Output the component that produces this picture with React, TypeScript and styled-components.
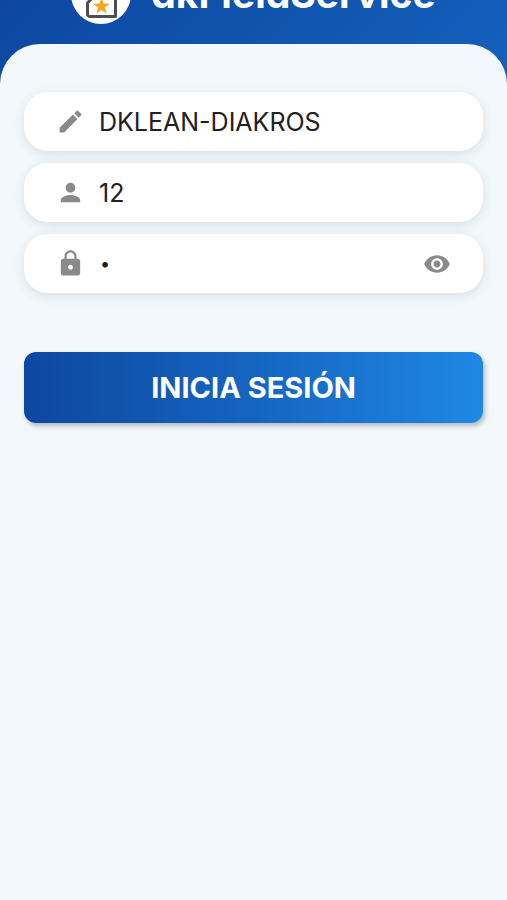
import React, { useState } from "react";
import styled, { createGlobalStyle } from "styled-components";
import { MdEdit, MdLock, MdPerson, MdVisibility } from "react-icons/md";

const GlobalStyle = createGlobalStyle`
  *, *::before, *::after { box-sizing: border-box; }
  html, body, #root { height: 100%; }
  body {
    margin: 0;
    font-family: Inter, Roboto, sans-serif;
    background: #f3f8fc;
  }
`;

const Page = styled.div`
  min-height: 100%;
  display: flex;
  flex-direction: column;
  background: linear-gradient(135deg, #0d47a1 0px, #1565c0 480px, #1e88e5 1100px);
`;

const Header = styled.header`
  height: 44px;
  overflow: hidden;
  display: flex;
  justify-content: center;
  align-items: flex-end;
  gap: 20px;
  padding-bottom: 20px;
`;

const Logo = styled.svg`
  width: 60px;
  height: 60px;
  flex: none;
`;

const Title = styled.h1`
  margin: 0;
  font-size: 39px;
  line-height: 60px;
  font-weight: 700;
  color: #fff;
`;

const Panel = styled.main`
  flex: 1;
  padding: 48px 24px;
  border-radius: 40px 40px 0 0;
  background: #f3f8fc;
`;

const Form = styled.form`
  display: flex;
  flex-direction: column;
  gap: 12px;
`;

const Field = styled.label`
  height: 59px;
  padding: 0 32px;
  display: flex;
  align-items: center;
  gap: 14px;
  border-radius: 24px;
  background: #fff;
  color: #8a8a8a;
  box-shadow: 0 3px 12px rgba(40, 40, 70, 0.12);

  > svg {
    flex: none;
    width: 29px;
    height: 29px;
  }
`;

const TextInput = styled.input`
  flex: 1;
  min-width: 0;
  padding: 0;
  border: 0;
  outline: 0;
  background: transparent;
  color: #212121;
  font: 400 25px/32px Inter, Roboto, sans-serif;

  &[type="password"] {
    padding-left: 1px;
    font-size: 18px;
  }
`;

const IconButton = styled.button`
  display: flex;
  padding: 0;
  border: 0;
  background: none;
  color: inherit;
  cursor: pointer;

  svg {
    width: 28px;
    height: 28px;
  }
`;

const SubmitButton = styled.button`
  height: 71px;
  margin-top: 47px;
  border: 0;
  border-radius: 12px;
  background: linear-gradient(90deg, #0d47a1, #1565c0 50%, #1e88e5);
  box-shadow: 2px 3px 5px rgba(0, 0, 0, 0.25);
  color: #fff;
  font: 700 29px/34px Inter, Roboto, sans-serif;
  cursor: pointer;
`;

export default function App() {
  const [visible, setVisible] = useState(false);

  return (
    <>
      <GlobalStyle />
      <Page>
        <Header>
          <Logo viewBox="0 0 60 60" aria-hidden="true">
            <circle cx="30" cy="30" r="30" fill="#fff" />
            <path
              d="M30 18 44.5 30V52.5H18.500L16.500 51V39L22 33V25Z"
              fill="none"
              stroke="#4d4d52"
              strokeWidth="3"
              strokeLinejoin="round"
            />
            <path
              d="M30.5 34.5 32.5 39.8 38.1 40 33.7 43.5 35.2 49 30.5 45.9 25.8 49 27.3 43.5 22.9 40 28.5 39.8Z"
              fill="#f0a91c"
              stroke="#f0a91c"
              strokeWidth="0.5"
              strokeLinejoin="round"
            />
          </Logo>
          <Title>dkFieldService</Title>
        </Header>
        <Panel>
          <Form onSubmit={(event) => event.preventDefault()}>
            <Field>
              <MdEdit aria-hidden="true" />
              <TextInput aria-label="Empresa" defaultValue="DKLEAN-DIAKROS" />
            </Field>
            <Field>
              <MdPerson aria-hidden="true" />
              <TextInput aria-label="Usuario" defaultValue="12" />
            </Field>
            <Field>
              <MdLock aria-hidden="true" />
              <TextInput
                aria-label="Contraseña"
                type={visible ? "text" : "password"}
                defaultValue="1"
              />
              <IconButton
                type="button"
                aria-label="Mostrar contraseña"
                onClick={() => setVisible(!visible)}
              >
                <MdVisibility aria-hidden="true" />
              </IconButton>
            </Field>
            <SubmitButton type="submit">INICIA SESIÓN</SubmitButton>
          </Form>
        </Panel>
      </Page>
    </>
  );
}
